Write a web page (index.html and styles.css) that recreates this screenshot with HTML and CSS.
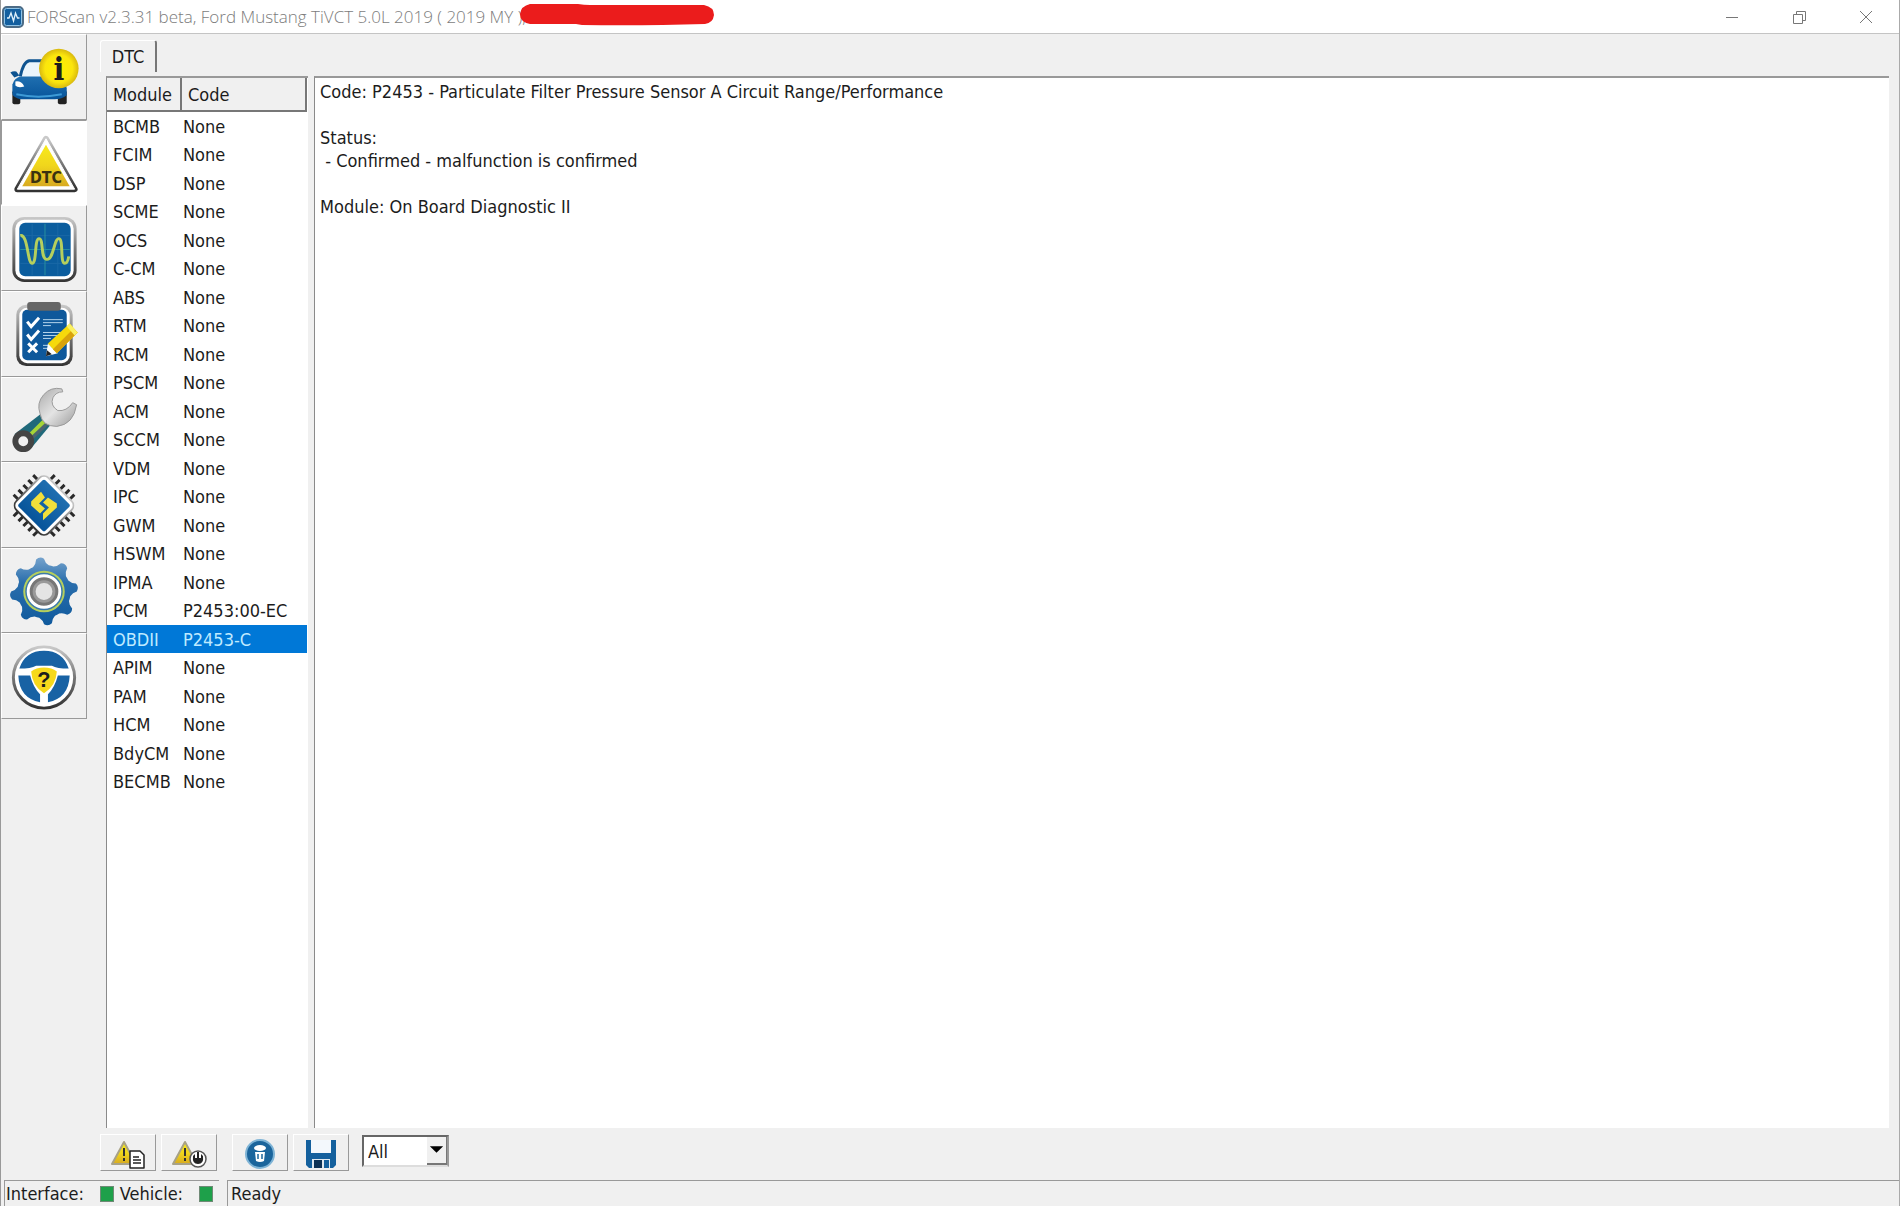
FILE: index.html
```html
<!DOCTYPE html>
<html lang="en">
<head>
  <meta charset="UTF-8" />
  <meta name="viewport" content="width=device-width, initial-scale=1.0"/>
  <title>FORScan v2.3.31 beta</title>
  <link rel="stylesheet" href="styles.css">
</head>
<body>
  <!-- Shared gradients -->
  <svg class="defs" aria-hidden="true">
    <defs>
      <linearGradient id="metal" x1="0" y1="0" x2="0" y2="1">
        <stop offset="0" stop-color="#c9c9c9"/><stop offset="0.5" stop-color="#777"/><stop offset="1" stop-color="#333"/>
      </linearGradient>
      <linearGradient id="blue" x1="0" y1="0" x2="0" y2="1">
        <stop offset="0" stop-color="#1f6fb0"/><stop offset="1" stop-color="#07549a"/>
      </linearGradient>
      <linearGradient id="gearBlue" x1="0" y1="0" x2="0" y2="1">
        <stop offset="0" stop-color="#8fb5d8"/><stop offset="0.4" stop-color="#2a6eac"/><stop offset="1" stop-color="#0b569a"/>
      </linearGradient>
      <linearGradient id="yellow" x1="0" y1="0" x2="0" y2="1">
        <stop offset="0" stop-color="#f8ea1c"/><stop offset="0.5" stop-color="#f0d61c"/><stop offset="1" stop-color="#d8aa20"/>
      </linearGradient>
      <radialGradient id="ball">
        <stop offset="0" stop-color="#fff200"/><stop offset="0.7" stop-color="#fbe50d"/><stop offset="1" stop-color="#d9b90f"/>
      </radialGradient>
      <linearGradient id="steel" x1="0" y1="0" x2="1" y2="1">
        <stop offset="0" stop-color="#aaa"/><stop offset="0.5" stop-color="#e4e4e4"/><stop offset="1" stop-color="#999"/>
      </linearGradient>
      <clipPath id="gearShape">
        <circle cx="42" cy="43" r="27"/>
        <path id="tooth" d="M29 20Q37 17 38 10Q42 7 46 10Q47 17 55 20L42 43Z" transform="rotate(-7 42 43)"/>
        <use href="#tooth" transform="rotate(45 42 43)"/>
        <use href="#tooth" transform="rotate(90 42 43)"/>
        <use href="#tooth" transform="rotate(135 42 43)"/>
        <use href="#tooth" transform="rotate(180 42 43)"/>
        <use href="#tooth" transform="rotate(225 42 43)"/>
        <use href="#tooth" transform="rotate(270 42 43)"/>
        <use href="#tooth" transform="rotate(315 42 43)"/>
      </clipPath>
    </defs>
  </svg>

  <div class="window">
    <header class="titlebar">
      <svg class="app-icon" viewBox="0 0 22 22">
        <rect x="1" y="1" width="20" height="20" rx="4" fill="#135f9f" stroke="#4d6c86" stroke-width="2"/>
        <rect x="2.5" y="2.5" width="17" height="17" rx="2" fill="none" stroke="#8fc3e6"/>
        <path d="M5 12h2l2-5 2.500 8 2-8 2 5h2" fill="none" stroke="#dff0fa" stroke-width="1.300"/>
      </svg>
      <h1>FORScan v2.3.31 beta, Ford Mustang TiVCT 5.0L 2019 ( 2019 MY ),</h1>
      <svg class="scribble" viewBox="0 0 194 22">
        <path d="M10 0H58Q64 1 70 1L184 1Q194 3 194 11Q193 19 185 20Q120 22 62 21L56 20H10Q0 18 0 10Q1 2 10 0Z" fill="#eb1c1c"/>
      </svg>
      <div class="window-buttons">
        <button aria-label="Minimize"><svg viewBox="0 0 14 14"><path d="M1 7.500h12"/></svg></button>
        <button aria-label="Restore"><svg viewBox="0 0 14 14"><path d="M1.500 4.500h9v9h-9zM4.500 4V1.500h9v9H11"/></svg></button>
        <button aria-label="Close"><svg viewBox="0 0 14 14"><path d="M1 1l12 12M13 1L1 13"/></svg></button>
      </div>
    </header>

    <div class="workspace">
      <nav class="sidebar">
        <button aria-label="Vehicle">
          <svg viewBox="0 0 84 84">
            <path d="M18 42Q21 27 27 26H50L58 44" fill="#e9f4fb" stroke="#0d5390" stroke-width="3"/>
            <path d="M8 38q3-2 6-1l3 4-5 2z" fill="#0d5390"/>
            <rect x="10" y="56" width="8" height="14" rx="2" fill="#222"/>
            <rect x="56" y="56" width="9" height="14" rx="2" fill="#222"/>
            <path d="M10 50Q12 43 19 42H57Q64 45 65 54V61Q60 65 53 65H18Q11 63 10 60Z" fill="url(#blue)"/>
            <path d="M13 47q6-1 9 5-6 2-9-1z" fill="#fff"/>
            <path d="M14 60q22 5 46 0" fill="none" stroke="#3d9ad6" stroke-width="2"/>
            <circle cx="57" cy="34" r="20" fill="url(#ball)"/>
            <text x="57" y="46" class="info-letter">i</text>
          </svg>
        </button>
        <button class="active" aria-label="DTC">
          <svg viewBox="0 0 84 84">
            <path d="M44 18L73 69H15Z" fill="#fff" stroke="url(#metal)" stroke-width="6" stroke-linejoin="round"/>
            <path d="M44 18L73 69H15Z" fill="#fff" stroke="#fff" stroke-width="1" stroke-linejoin="round"/>
            <path d="M44 24L68 66H20Z" fill="url(#yellow)"/>
            <text x="44" y="63" class="dtc-letters">DTC</text>
          </svg>
        </button>
        <button aria-label="Oscilloscope">
          <svg viewBox="0 0 84 84">
            <rect x="10" y="10" width="65" height="66" rx="12" fill="url(#metal)"/>
            <rect x="13" y="13" width="59" height="60" rx="9" fill="#fff"/>
            <rect x="17" y="16" width="52" height="54" rx="6" fill="#0b5d9e"/>
            <path d="M18 29h50M18 57h50M30 17v52M56 17v52" stroke="#1a69a6"/>
            <path d="M18 43h50M43 17v52" stroke="#28909f"/>
            <path d="M18 29C26 27 25 57 30 57S32 32 37 32 38 53 45 53 52 32 57 32 58 57 63 57Q66 57 67 50" fill="none" stroke="#b5cf5d" stroke-width="3"/>
          </svg>
        </button>
        <button aria-label="Tests">
          <svg viewBox="0 0 84 84">
            <rect x="14" y="13" width="57" height="62" rx="10" fill="url(#metal)"/>
            <rect x="17" y="16" width="51" height="56" rx="8" fill="#fff"/>
            <rect x="20" y="18" width="45" height="51" rx="5" fill="#0e589b"/>
            <rect x="25" y="10" width="34" height="9" rx="3" fill="#666"/>
            <path d="M25 30l4 5 8-9M25 43l4 5 8-9M26 52l9 9M35 52l-9 9" fill="none" stroke="#fff" stroke-width="3"/>
            <path d="M41 28h20M41 31h20M41 34h8M41 41h18M41 44h15M41 47h8M41 54h10M41 57h8" stroke="#b7d5ec" stroke-width="1"/>
            <path d="M44 65L46 52L56 62Z" fill="#fff"/><path d="M44 65l1-6 5 4z" fill="#222"/>
            <path d="M46 52L68 32L76 41L55 62Z" fill="#f6d90b"/>
            <path d="M51 58L72 37L76 41L55 62Z" fill="#d9a30c"/>
            <path d="M65 35l3-3 8 9-3 3z" fill="#fbf163"/>
          </svg>
        </button>
        <button aria-label="Service">
          <svg viewBox="0 0 84 84">
            <path d="M12 57L38 37L49 47L29 71Z" fill="#20697a"/>
            <path d="M30 63L49 45L46 40L25 57Z" fill="#4b6470"/>
            <path d="M27 56L43 40L46 43L29 59Z" fill="#a5d437"/>
            <path d="M60 11A19 19 0 0 0 38 36Q40 49 55 49Q72 47 75 27L71 25Q65 34 56 33Q48 28 51 20Q54 14 61 14Z" fill="url(#steel)" stroke="#999"/>
            <circle cx="21" cy="64" r="8" fill="#f0f0f0" stroke="#444" stroke-width="6"/>
          </svg>
        </button>
        <button aria-label="Configuration and programming">
          <svg viewBox="0 0 84 84">
            <path d="M13 36L35 14M49 14L71 36M13 50L35 72M49 72L71 50" stroke="#2a2a2a" stroke-width="8" stroke-dasharray="3 4" fill="none"/>
            <rect x="18" y="19" width="48" height="48" rx="8" transform="rotate(45 42 43)" fill="url(#metal)"/>
            <rect x="20" y="21" width="44" height="44" rx="5" transform="rotate(45 42 43)" fill="#fff"/>
            <rect x="23" y="24" width="38" height="38" rx="2" transform="rotate(45 42 43)" fill="url(#blue)"/>
            <path d="M39 29L29 39V43L38 51L43 46L37 41L43 35ZM46 35L41 40L47 45L41 51V58L55 45V41Z" fill="#f2df3b"/>
          </svg>
        </button>
        <button aria-label="Settings">
          <svg viewBox="0 0 84 84">
            <rect width="84" height="84" fill="url(#gearBlue)" clip-path="url(#gearShape)"/>
            <circle cx="42" cy="43" r="20" fill="#3b7aaa" stroke="#b5cf5d" stroke-width="2"/>
            <circle cx="42" cy="43" r="16" fill="#777" stroke="#fff" stroke-width="3"/>
            <circle cx="42" cy="43" r="10" fill="#e4e4e4" stroke="#999" stroke-width="3"/>
          </svg>
        </button>
        <button aria-label="Help">
          <svg viewBox="0 0 84 84">
            <circle cx="42" cy="43" r="31" fill="#fff" stroke="url(#metal)" stroke-width="3"/>
            <path d="M17 34Q23 16 42 16T67 34Q55 34 50 31H34Q29 34 17 34Z" fill="#1862a4"/>
            <path d="M16 41H28Q31 53 38 60V68Q17 64 16 41Z" fill="#1862a4"/>
            <path d="M68 41H56Q53 53 46 60V68Q67 64 68 41Z" fill="#1862a4"/>
            <path d="M42 33Q50 33 55 37Q54 52 42 59Q30 52 29 37Q34 33 42 33Z" fill="#f6d91b"/>
            <text x="42" y="53" class="question">?</text>
          </svg>
        </button>
      </nav>

      <main class="page">
        <div class="tabs" role="tablist">
          <button class="tab" role="tab" aria-selected="true">DTC</button>
        </div>

        <div class="panels">
          <section class="module-list">
            <table>
              <thead>
                <tr><th>Module</th><th>Code</th></tr>
              </thead>
              <tbody>
                <tr><td>BCMB</td><td>None</td></tr>
                <tr><td>FCIM</td><td>None</td></tr>
                <tr><td>DSP</td><td>None</td></tr>
                <tr><td>SCME</td><td>None</td></tr>
                <tr><td>OCS</td><td>None</td></tr>
                <tr><td>C-CM</td><td>None</td></tr>
                <tr><td>ABS</td><td>None</td></tr>
                <tr><td>RTM</td><td>None</td></tr>
                <tr><td>RCM</td><td>None</td></tr>
                <tr><td>PSCM</td><td>None</td></tr>
                <tr><td>ACM</td><td>None</td></tr>
                <tr><td>SCCM</td><td>None</td></tr>
                <tr><td>VDM</td><td>None</td></tr>
                <tr><td>IPC</td><td>None</td></tr>
                <tr><td>GWM</td><td>None</td></tr>
                <tr><td>HSWM</td><td>None</td></tr>
                <tr><td>IPMA</td><td>None</td></tr>
                <tr><td>PCM</td><td>P2453:00-EC</td></tr>
                <tr class="selected"><td>OBDII</td><td>P2453-C</td></tr>
                <tr><td>APIM</td><td>None</td></tr>
                <tr><td>PAM</td><td>None</td></tr>
                <tr><td>HCM</td><td>None</td></tr>
                <tr><td>BdyCM</td><td>None</td></tr>
                <tr><td>BECMB</td><td>None</td></tr>
              </tbody>
            </table>
          </section>

          <section class="details">Code: P2453 - Particulate Filter Pressure Sensor A Circuit Range/Performance

Status:
 - Confirmed - malfunction is confirmed

Module: On Board Diagnostic II</section>
        </div>

        <div class="toolbar">
          <button aria-label="Read DTC">
            <svg viewBox="0 0 36 30">
              <path d="M14 3L26 25H2Z" fill="url(#yellow)" stroke="#a8a286" stroke-width="2" stroke-linejoin="round"/>
              <path d="M14 9v8M14 19v3" stroke="#333" stroke-width="2"/>
              <path d="M20 12h10l4 4v13H20z" fill="#fff" stroke="#222" stroke-width="1.500" stroke-linejoin="round"/>
              <path d="M23 18h6M23 21h8M23 24h8" stroke="#222" stroke-width="1.500"/>
            </svg>
          </button>
          <button aria-label="Reset DTC">
            <svg viewBox="0 0 36 30">
              <path d="M14 3L26 25H2Z" fill="url(#yellow)" stroke="#a8a286" stroke-width="2" stroke-linejoin="round"/>
              <path d="M14 9v8M14 19v3" stroke="#333" stroke-width="2"/>
              <circle cx="27" cy="20" r="8" fill="#fff" stroke="#555" stroke-width="1.500"/>
              <path d="M22 17Q21 25 27 25T32 17L30 15V19H28V13H26V19H24V15Z" fill="#222"/>
            </svg>
          </button>
          <button class="group-start" aria-label="Clear log">
            <svg viewBox="0 0 36 30">
              <circle cx="18" cy="15" r="14" fill="#1b659c" stroke="#7fb4d6" stroke-width="2"/>
              <ellipse cx="18" cy="9" rx="6" ry="3" fill="#fff"/>
              <path d="M13 13h10l-1 9q-4 2-8 0z" fill="#fff"/>
              <path d="M16 15v5M20 15v5" stroke="#1b659c" stroke-width="1.500"/>
            </svg>
          </button>
          <button aria-label="Save">
            <svg viewBox="0 0 36 30">
              <path d="M3 1H33V26L30 29H6L3 26Z" fill="#14609d"/>
              <path d="M8 1h20v13H8z" fill="#f3f8fc"/>
              <path d="M9 20h18v9H9z" fill="#dfe8ef"/>
              <path d="M11 21h8v8h-8z" fill="#0d3154"/><path d="M21 21h5v8h-5z" fill="#14609d"/>
            </svg>
          </button>
          <div class="combo">
            <select aria-label="Module filter">
              <option>All</option>
            </select>
            <svg class="combo-arrow" viewBox="0 0 20 26"><path d="M3 9H17L10 16Z" fill="#000"/></svg>
          </div>
        </div>
      </main>
    </div>

    <footer class="statusbar">
      <div class="status-lights">
        <span>Interface:</span><i class="light"></i>
        <span>Vehicle:</span><i class="light"></i>
      </div>
      <div class="status-text">Ready</div>
    </footer>
  </div>
</body>
</html>
```
FILE: styles.css
```css
* {
  box-sizing: border-box;
}

body {
  margin: 0;
  background: #f0f0f0;
  color: #1c1c1c;
  font-family: Tahoma, "DejaVu Sans Condensed", "DejaVu Sans", sans-serif;
  font-stretch: condensed;
  font-size: 18px;
}

button {
  padding: 0;
  border: none;
  background: #f0f0f0;
  color: inherit;
  font: inherit;
}

.defs {
  position: absolute;
  width: 0;
  height: 0;
}

.window {
  display: flex;
  flex-direction: column;
  height: 100vh;
  border-left: 1px solid #999;
  border-right: 1px solid #aaa;
}

/* Title bar */
.titlebar {
  display: flex;
  align-items: center;
  height: 34px;
  padding-left: 1px;
  background: #fff;
  border-bottom: 1px solid #c4c4c4;
}

.app-icon {
  width: 22px;
  height: 22px;
  margin-right: 3px;
}

.titlebar h1 {
  margin: 0;
  color: #7c7c7c;
  font-family: "Segoe UI", "Open Sans", sans-serif;
  font-size: 17px;
  font-weight: 300;
  font-stretch: normal;
  white-space: nowrap;
}

.scribble {
  width: 194px;
  height: 22px;
  margin: 0 0 4px -6px;
}

.window-buttons {
  display: flex;
  margin-left: auto;
}

.window-buttons button {
  width: 67px;
  height: 32px;
  background: none;
}

.window-buttons svg {
  display: block;
  width: 14px;
  height: 14px;
  margin: auto;
  fill: none;
  stroke: #777;
}

.workspace {
  display: flex;
  flex: 1;
  min-height: 0;
}

/* Left icon bar */
.sidebar {
  display: grid;
  grid-template-rows: repeat(8, minmax(0, 1fr));
  width: 86px;
  height: 685px;
}

.sidebar button {
  border: 1px solid;
  border-color: #fff #999 #999 #fff;
}

.sidebar button.active {
  background: #fff;
  border-color: #999 #fff #fff #999;
}

.sidebar svg {
  display: block;
  width: 84px;
  height: 83px;
}

.info-letter,
.dtc-letters,
.question {
  fill: #1c1c1c;
  font-weight: bold;
  text-anchor: middle;
}

.info-letter {
  font-family: "DejaVu Serif", serif;
  font-size: 32px;
}

.dtc-letters {
  fill: #3a3210;
  font-family: "DejaVu Sans Condensed", sans-serif;
  font-size: 16px;
}

.question {
  font-family: "Liberation Sans", sans-serif;
  font-size: 22px;
}

/* DTC page */
.page {
  display: flex;
  flex: 1;
  flex-direction: column;
  min-width: 0;
  padding: 6px 10px 0 13px;
}

.tab {
  width: 57px;
  height: 32px;
  border-top: 1px solid #fff;
  border-left: 1px solid #fff;
  border-right: 2px solid #777;
  border-radius: 3px 3px 0 0;
}

.panels {
  display: flex;
  flex: 1;
  gap: 6px;
  min-height: 0;
  margin: 4px 0 0 6px;
}

.module-list,
.details {
  background: #fff;
  border-top: 2px solid #999;
  border-left: 1px solid #8a8a8a;
}

.module-list {
  width: 202px;
  overflow: hidden;
}

.module-list table {
  width: 200px;
  border-collapse: separate;
  border-spacing: 0;
  table-layout: fixed;
}

.module-list th {
  height: 34px;
  padding: 0 6px;
  background: #f0f0f0;
  border-right: 2px solid #777;
  border-bottom: 2px solid #777;
  font-weight: normal;
  text-align: left;
}

.module-list th:first-child {
  width: 75px;
}

.module-list td {
  height: 28px;
  padding: 0 0 0 6px;
  white-space: nowrap;
}

.module-list td + td {
  padding-left: 1px;
}

.module-list tr:nth-child(even) td {
  height: 29px;
}

.module-list .selected td {
  background: #0078d7;
  color: #bfeaff;
}

.details {
  flex: 1;
  padding: 2px 5px;
  line-height: 23px;
  white-space: pre-wrap;
}

/* Bottom buttons */
.toolbar {
  display: flex;
  gap: 5px;
  padding: 6px 0 9px;
}

.toolbar button {
  width: 56px;
  height: 37px;
  border: 1px solid;
  border-color: #fff #999 #999 #fff;
}

.toolbar .group-start {
  margin-left: 10px;
}

.toolbar button svg {
  display: block;
  width: 36px;
  height: 30px;
  margin: 3px auto 0;
}

.combo {
  position: relative;
  width: 87px;
  height: 32px;
  margin: 1px 0 0 8px;
}

.combo select {
  width: 100%;
  height: 100%;
  padding: 0 4px;
  appearance: none;
  background: #fff;
  border: 2px solid;
  border-color: #666 #999 #ddd #666;
  border-radius: 0;
  color: inherit;
  font: inherit;
}

.combo-arrow {
  position: absolute;
  top: 2px;
  right: 2px;
  width: 20px;
  height: 28px;
  background: #f0f0f0;
  border-right: 1px solid #777;
  border-bottom: 2px solid #777;
  pointer-events: none;
}

/* Status bar */
.statusbar {
  display: flex;
  gap: 8px;
  height: 26px;
  padding-left: 3px;
  line-height: 26px;
}

.status-lights,
.status-text {
  border-top: 1px solid #999;
  border-left: 1px solid #999;
}

.status-lights {
  display: flex;
  align-items: center;
  width: 215px;
  padding-left: 1px;
}

.status-lights span {
  margin-right: 16px;
}

.light {
  width: 16px;
  height: 16px;
  margin-right: 6px;
  background: #1ea04a;
  border: 1px solid #6f8a76;
}

.status-text {
  flex: 1;
  padding-left: 3px;
}
```
